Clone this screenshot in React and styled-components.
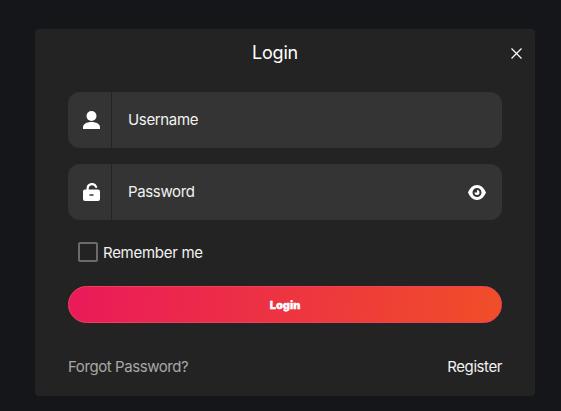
import React from 'react';
import styled, { createGlobalStyle } from 'styled-components';

const GlobalStyle = createGlobalStyle`
    html, body {
        margin: 0;
        padding: 0;
        background: #14161a;
    }
    * {
        box-sizing: border-box;
    }
`;

const Page = styled.div`
    width: 561px;
    height: 411px;
    padding: 29px 26px 15px 35px;
    font-family: "Inter", "Liberation Sans", sans-serif;
    color: #fff;
`;

const Modal = styled.div`
    position: relative;
    width: 500px;
    height: 367px;
    padding: 12px 33px 0;
    background: #232323;
    border-radius: 4px;
`;

const Title = styled.h2`
    margin: 0 20px 28px 0;
    height: 23px;
    font-size: 18px;
    font-weight: 400;
    line-height: 23px;
    letter-spacing: -0.2px;
    text-align: center;
`;

const CloseButton = styled.button`
    position: absolute;
    top: 19px;
    right: 13px;
    width: 11px;
    height: 11px;
    padding: 0;
    display: flex;
    background: none;
    border: 0;
    color: #fff;
`;

const Field = styled.div`
    display: flex;
    align-items: center;
    height: 56px;
    margin-bottom: 16px;
    background: #343434;
    border-radius: 12px;
`;

const IconCell = styled.div`
    display: flex;
    align-items: center;
    justify-content: center;
    flex: none;
    width: 44px;
    height: 100%;
    padding-left: 4px;
    border-right: 1px solid #232323;
`;

const Input = styled.div`
    flex: 1;
    padding-left: 16px;
    margin-top: -2px;
    font-size: 15px;
    letter-spacing: -0.35px;
    color: #f2f2f2;
`;

const EyeCell = styled.div`
    display: flex;
    margin-right: 16px;
`;

const RememberRow = styled.label`
    display: flex;
    align-items: center;
    gap: 5px;
    height: 22px;
    margin: 21px 0 23px 10px;
    font-size: 15px;
    letter-spacing: -0.28px;
    color: #f2f2f2;
`;

const Checkbox = styled.span`
    width: 20px;
    height: 20px;
    border: 2px solid #6b6b6b;
    border-radius: 2px;
`;

const LoginButton = styled.button`
    display: block;
    width: 100%;
    height: 37px;
    padding: 0;
    border: 1px solid #f0405a;
    border-radius: 19px;
    background: linear-gradient(95deg, #ea1a5a 0%, #f04e28 100%);
    color: #fff;
    font-family: inherit;
    font-size: 11px;
    font-weight: 900;
    -webkit-text-stroke: 0.3px #fff;
`;

const Footer = styled.div`
    display: flex;
    justify-content: space-between;
    align-items: center;
    margin-top: 34px;
    font-size: 15px;
    letter-spacing: -0.42px;
`;

const ForgotLink = styled.a`
    color: #a8a8a8;
`;

const RegisterLink = styled.a`
    color: #f2f2f2;
`;

const UserIcon = () => (
    <svg width="17" height="18" viewBox="0 0 17 18" fill="#fff">
        <circle cx="8.5" cy="5" r="5" />
        <path d="M0 18v-1.800C0 13.200 3.500 11 8.500 11s8.500 2.200 8.500 5.200V18z" />
    </svg>
);

const LockIcon = () => (
    <svg width="17" height="18" viewBox="0 0 17 18" fill="none">
        <path d="M4.600 7V5.400a4.400 4.400 0 0 1 8.500-1.500" stroke="#fff" strokeWidth="2.200" strokeLinecap="round" />
        <path fillRule="evenodd" fill="#fff" d="M2 6.500h13a2 2 0 0 1 2 2v7.500a2 2 0 0 1-2 2H2a2 2 0 0 1-2-2V8.500a2 2 0 0 1 2-2zM6.500 11.200v1.500h4v-1.500z" />
    </svg>
);

const EyeIcon = () => (
    <svg width="18" height="15" viewBox="0 0 18 15" fill="none">
        <path fillRule="evenodd" fill="#fff" d="M9 0c4 0 7.200 3 9 7.500-1.800 4.500-5 7.500-9 7.500S1.800 12 0 7.500C1.800 3 5 0 9 0zM9 3a4.500 4.500 0 1 0 0 9 4.500 4.500 0 0 0 0-9z" />
        <path fill="#fff" d="M9 5a2.500 2.500 0 1 1-2.500 2.500H9z" />
    </svg>
);

const CloseIcon = () => (
    <svg width="11" height="11" viewBox="0 0 11 11" stroke="currentColor" strokeWidth="1.2">
        <path d="M0.500 0.500l10 10M10.500 0.500l-10 10" />
    </svg>
);

export default function App() {
    return (
        <Page>
            <GlobalStyle />
            <Modal>
                <Title>Login</Title>
                <CloseButton><CloseIcon /></CloseButton>
                <Field>
                    <IconCell><UserIcon /></IconCell>
                    <Input>Username</Input>
                </Field>
                <Field>
                    <IconCell><LockIcon /></IconCell>
                    <Input>Password</Input>
                    <EyeCell><EyeIcon /></EyeCell>
                </Field>
                <RememberRow>
                    <Checkbox />
                    Remember me
                </RememberRow>
                <LoginButton>Login</LoginButton>
                <Footer>
                    <ForgotLink>Forgot Password?</ForgotLink>
                    <RegisterLink>Register</RegisterLink>
                </Footer>
            </Modal>
        </Page>
    );
}
